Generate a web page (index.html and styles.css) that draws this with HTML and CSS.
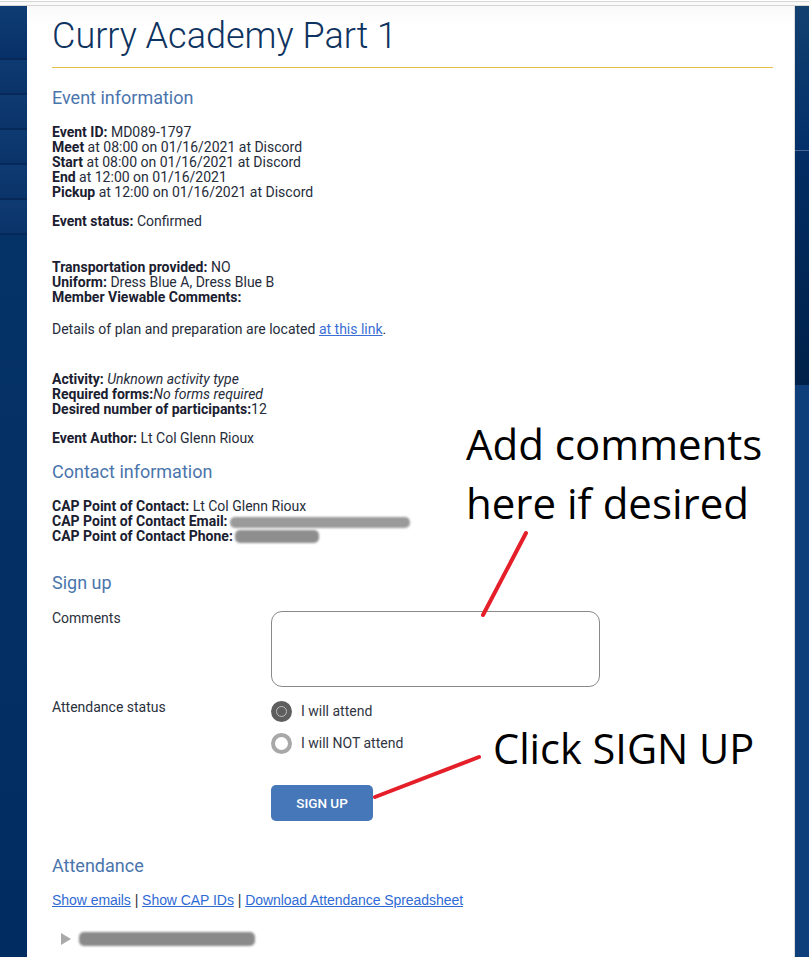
FILE: index.html
```html
<!DOCTYPE html>
<html lang="en">
<head>
<meta charset="utf-8">
<title>Curry Academy Part 1</title>
<link rel="stylesheet" href="styles.css">
</head>
<body>
<div class="page">
  <div class="topbar"></div>
  <div class="layout">
    <nav class="leftnav">
      <div class="nav-item"></div>
      <div class="nav-item"></div>
      <div class="nav-item"></div>
      <div class="nav-item"></div>
      <div class="nav-item"></div>
      <div class="nav-item"></div>
      <div class="nav-rest"></div>
    </nav>
    <main class="content">
      <h1 class="title">Curry Academy Part 1</h1>
      <hr class="rule">

      <h2 class="section">Event information</h2>
      <p class="info first"><b>Event ID:</b> MD089-1797<br><b>Meet</b> at 08:00 on 01/16/2021 at Discord<br><b>Start</b> at 08:00 on 01/16/2021 at Discord<br><b>End</b> at 12:00 on 01/16/2021<br><b>Pickup</b> at 12:00 on 01/16/2021 at Discord</p>
      <p class="info status"><b>Event status:</b> Confirmed</p>
      <p class="info transport"><b>Transportation provided:</b> NO<br><b>Uniform:</b> Dress Blue A, Dress Blue B<br><b>Member Viewable Comments:</b></p>
      <p class="info details">Details of plan and preparation are located <a class="inline-link" href="#">at this link</a>.</p>
      <p class="info activity"><b>Activity:</b> <i>Unknown activity type</i><br><b>Required forms:</b><i>No forms required</i><br><b>Desired number of participants:</b>12</p>
      <p class="info author"><b>Event Author:</b> Lt Col Glenn Rioux</p>

      <h2 class="section contact-h">Contact information</h2>
      <p class="info first"><b>CAP Point of Contact:</b> Lt Col Glenn Rioux<br><b>CAP Point of Contact Email:</b><span class="redact email"></span><br><b>CAP Point of Contact Phone:</b><span class="redact phone"></span></p>

      <h2 class="section signup-h">Sign up</h2>
      <form class="signup-form">
        <label class="form-label" for="comments">Comments</label>
        <textarea id="comments" class="comments"></textarea>

        <span class="form-label status-label">Attendance status</span>
        <div class="options">
          <label class="radio"><span class="dot checked"></span>I will attend</label>
          <label class="radio"><span class="dot"></span>I will NOT attend</label>
          <button type="button" class="signup-btn">SIGN UP</button>
        </div>
      </form>

      <h2 class="section attendance-h">Attendance</h2>
      <p class="att-links"><a href="#">Show emails</a> | <a href="#">Show CAP IDs</a> | <a href="#">Download Attendance Spreadsheet</a></p>
      <div class="tree-row"><span class="tri"></span><span class="redact member"></span></div>
    </main>
    <aside class="rightbar">
      <div class="rb-top"></div>
      <div class="rb-mid"></div>
      <div class="rb-bottom"></div>
    </aside>
  </div>

  <div class="note note-comments">Add comments<br>here if desired</div>
  <div class="note note-signup">Click SIGN UP</div>
  <svg class="arrows" width="809" height="957" viewBox="0 0 809 957" aria-hidden="true">
    <line x1="526" y1="533" x2="483" y2="615" stroke="#e51f2a" stroke-width="4" stroke-linecap="round"/>
    <line x1="375" y1="797" x2="479" y2="757" stroke="#e51f2a" stroke-width="4" stroke-linecap="round"/>
  </svg>
</div>
</body>
</html>
```

FILE: styles.css
```css
html, body {
  margin: 0;
  padding: 0;
  background: #ffffff;
}

.page {
  position: relative;
  width: 809px;
  height: 957px;
  overflow: hidden;
  font-family: Roboto, "Liberation Sans", sans-serif;
}

.topbar {
  box-sizing: border-box;
  border-top: 1px solid #d6d6d6;
  border-bottom: 1px solid #d6d6d6;
  margin-top: 1px;
  height: 5px;
  background: #fafafa;
}

.layout {
  display: flex;
  height: 951px;
}

.leftnav {
  width: 27px;
  flex: none;
  display: flex;
  flex-direction: column;
  background: linear-gradient(#073468, #002c62);
}

.nav-item {
  height: 33px;
  border-bottom: 2px solid #06295a;
  background: linear-gradient(#0e3a72, #0a3469);
}
.nav-item:first-child {
  height: 52px;
  background: linear-gradient(#0f3c74, #083068);
}

.nav-rest {
  flex: 1;
}

.content {
  flex: 1;
  margin-left: 1px;
  padding: 0 21px 0 24px;
  border-right: 1px solid #dcdcdc;
  background: linear-gradient(#f9f9f9, #ffffff 20px);
  color: #1f2533;
}

.title {
  margin: 9px 0 0;
  font-size: 36px;
  line-height: 42px;
  font-weight: 300;
  color: #0e3360;
}

.rule {
  margin: 10px 0 0;
  border: 0;
  height: 1px;
  background: #e7bf45;
}

.section {
  margin: 19px 0 0;
  font-size: 18px;
  line-height: 21px;
  font-weight: 400;
  color: #4a75ac;
}

.contact-h { margin-top: 15px; }
.signup-h { margin-top: 28px; }
.attendance-h { margin-top: 34px; }

.info {
  margin: 0;
  font-size: 14px;
  line-height: 15px;
  color: #262c3a;
}
.info b {
  font-weight: 700;
  color: #1a2030;
}
.info.first { margin-top: 17px; }
.info.status { margin-top: 14px; }
.info.transport { margin-top: 31px; }
.info.details { margin-top: 17px; }
.info.activity { margin-top: 35px; }
.info.author { margin-top: 14px; }

.inline-link {
  color: #3b6fd4;
  text-decoration: underline;
}

.redact {
  display: inline-block;
  background: #8e8e8e;
  border-radius: 5px;
  filter: blur(1px);
  vertical-align: -2px;
}
.redact.email {
  width: 180px;
  height: 11px;
  margin-left: 2px;
  background: #9a9a9a;
}
.redact.phone {
  width: 84px;
  height: 13px;
  margin-left: 2px;
}

.signup-form {
  margin-top: 18px;
  display: grid;
  grid-template-columns: 219px 1fr;
  row-gap: 13px;
  font-size: 14px;
  line-height: 15px;
  color: #2a303c;
}

.comments {
  width: 329px;
  height: 76px;
  box-sizing: border-box;
  border: 1px solid #8a8a8a;
  border-radius: 11px;
  resize: none;
  margin: 0;
  padding: 6px;
  font: inherit;
}

.options {
  display: flex;
  flex-direction: column;
  align-items: flex-start;
  gap: 11px;
  padding-top: 1px;
}

.radio {
  display: flex;
  align-items: center;
  gap: 9px;
  height: 21px;
  color: #2f3542;
}

.dot {
  position: relative;
  width: 21px;
  height: 21px;
  box-sizing: border-box;
  border-radius: 50%;
  border: 4px solid #a8a8a8;
  background: #ffffff;
}
.dot.checked {
  border: 0;
  background: #5e5e5e;
}
.dot.checked::after {
  content: "";
  position: absolute;
  left: 5px;
  top: 5px;
  width: 11px;
  height: 11px;
  box-sizing: border-box;
  border-radius: 50%;
  border: 1.5px solid #bdbdbd;
}

.signup-btn {
  margin-top: 20px;
  width: 102px;
  height: 36px;
  border: 0;
  border-radius: 5px;
  background: #4577b9;
  color: #ffffff;
  font-family: Roboto, "Liberation Sans", sans-serif;
  font-size: 13.5px;
  font-weight: 500;
  padding: 0;
}

.att-links {
  margin: 16px 0 0;
  font-family: "Liberation Sans", Arial, sans-serif;
  font-size: 14px;
  line-height: 16px;
  letter-spacing: -0.05px;
  color: #333333;
}
.att-links a {
  color: #2f6ad5;
  text-decoration: underline;
}

.tree-row {
  margin-top: 22px;
  margin-left: 9px;
  display: flex;
  align-items: center;
  gap: 8px;
  height: 18px;
}
.tri {
  width: 0;
  height: 0;
  border-top: 6.5px solid transparent;
  border-bottom: 6.5px solid transparent;
  border-left: 10px solid #a9a9a9;
}
.redact.member {
  width: 176px;
  height: 14px;
  background: #8a8a8a;
}

.rightbar {
  width: 14px;
  flex: none;
  display: flex;
  flex-direction: column;
}
.rb-top {
  height: 144px;
  border-bottom: 1px solid #4a6590;
  background: linear-gradient(#12406f, #03306a);
}
.rb-mid {
  height: 234px;
  background: linear-gradient(#032d64, #00224a);
}
.rb-bottom {
  flex: 1;
  background: #0f3f7b;
}

.note {
  position: absolute;
  font-family: "Open Sans", Lato, sans-serif;
  color: #000000;
  font-size: 42px;
  line-height: 59px;
}
.note-comments {
  left: 466px;
  top: 414px;
}
.note-signup {
  left: 493px;
  top: 719px;
  font-size: 41.5px;
}

.arrows {
  position: absolute;
  left: 0;
  top: 0;
  pointer-events: none;
}
```
